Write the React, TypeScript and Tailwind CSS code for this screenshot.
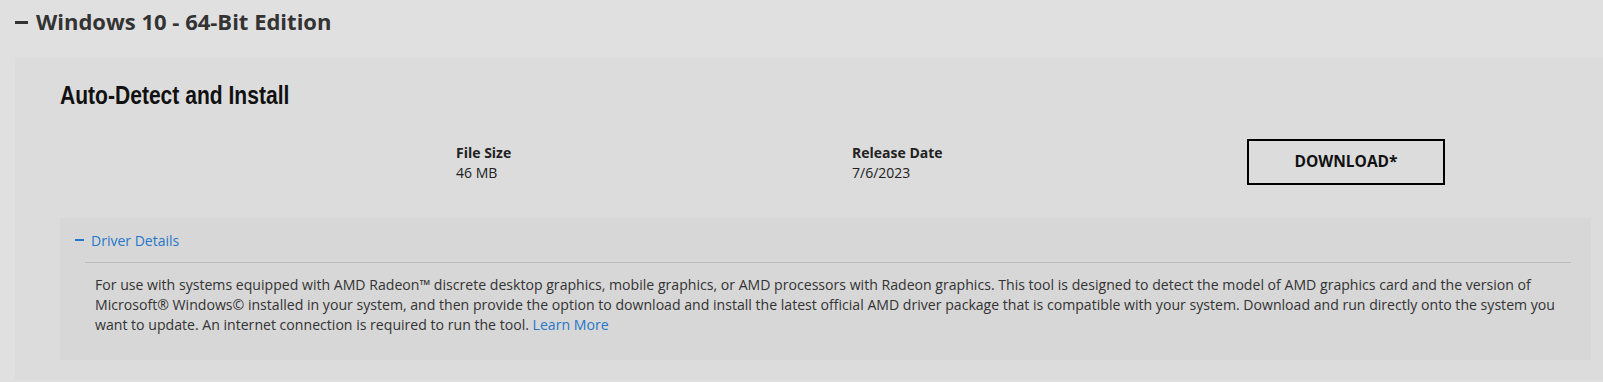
export default function App() {
  return (
    <div className="h-[382px] w-full overflow-hidden bg-[#e0e0e0] font-['Open_Sans',sans-serif]">
      <div className="flex h-[58px] items-start pl-[15px] pt-[4px]">
        <span className="mt-[17px] mr-[8px] h-[3px] w-[13px] bg-[#333]" />
        <h2 className="text-[22px] leading-[34px] font-bold text-[#333]">Windows 10 - 64-Bit Edition</h2>
      </div>

      <div className="ml-[15px] w-[1621px] bg-[#dcdcdc] px-[45px] pt-[22px] pb-[20px]">
        <h3 className="inline-block origin-left scale-x-[0.81] font-['Liberation_Sans',sans-serif] text-[26px] leading-[30px] font-bold text-[#111]">
          Auto-Detect and Install
        </h3>

        <div className="mt-[30px] grid grid-cols-[396px_396px_395px_1fr] items-start">
          <div />
          <div className="pt-[3px] text-[14px] leading-[20px] text-[#222]">
            <div className="font-bold">File Size</div>
            <div>46 MB</div>
          </div>
          <div className="pt-[3px] text-[14px] leading-[20px] text-[#222]">
            <div className="font-bold">Release Date</div>
            <div>7/6/2023</div>
          </div>
          <div>
            <button className="-mt-[1px] h-[46px] w-[198px] border-2 border-black text-[15.5px] font-bold text-[#111]">
              DOWNLOAD*
            </button>
          </div>
        </div>

        <div className="mt-[33px] bg-[#d7d7d7] pr-[20px] pb-[25px] pl-[15px]">
          <div className="flex h-[44px] items-center">
            <span className="mr-[7px] h-[2px] w-[9px] bg-[#2677c9]" />
            <span className="text-[14px] text-[#2677c9]">Driver Details</span>
          </div>
          <div className="ml-[10px] border-t border-[#bbb] pt-[12px] pl-[10px] text-[14.1px] leading-[20px] text-[#333]">
            For use with systems equipped with AMD Radeon™ discrete desktop graphics, mobile graphics, or AMD processors with Radeon graphics. This tool is designed to detect the model of AMD graphics card and the version of Microsoft® Windows© installed in your system, and then provide the option to download and install the latest official AMD driver package that is compatible with your system. Download and run directly onto the system you want to update. An internet connection is required to run the tool.{" "}
            <a className="text-[#2677c9]">Learn More</a>
          </div>
        </div>
      </div>
    </div>
  );
}
